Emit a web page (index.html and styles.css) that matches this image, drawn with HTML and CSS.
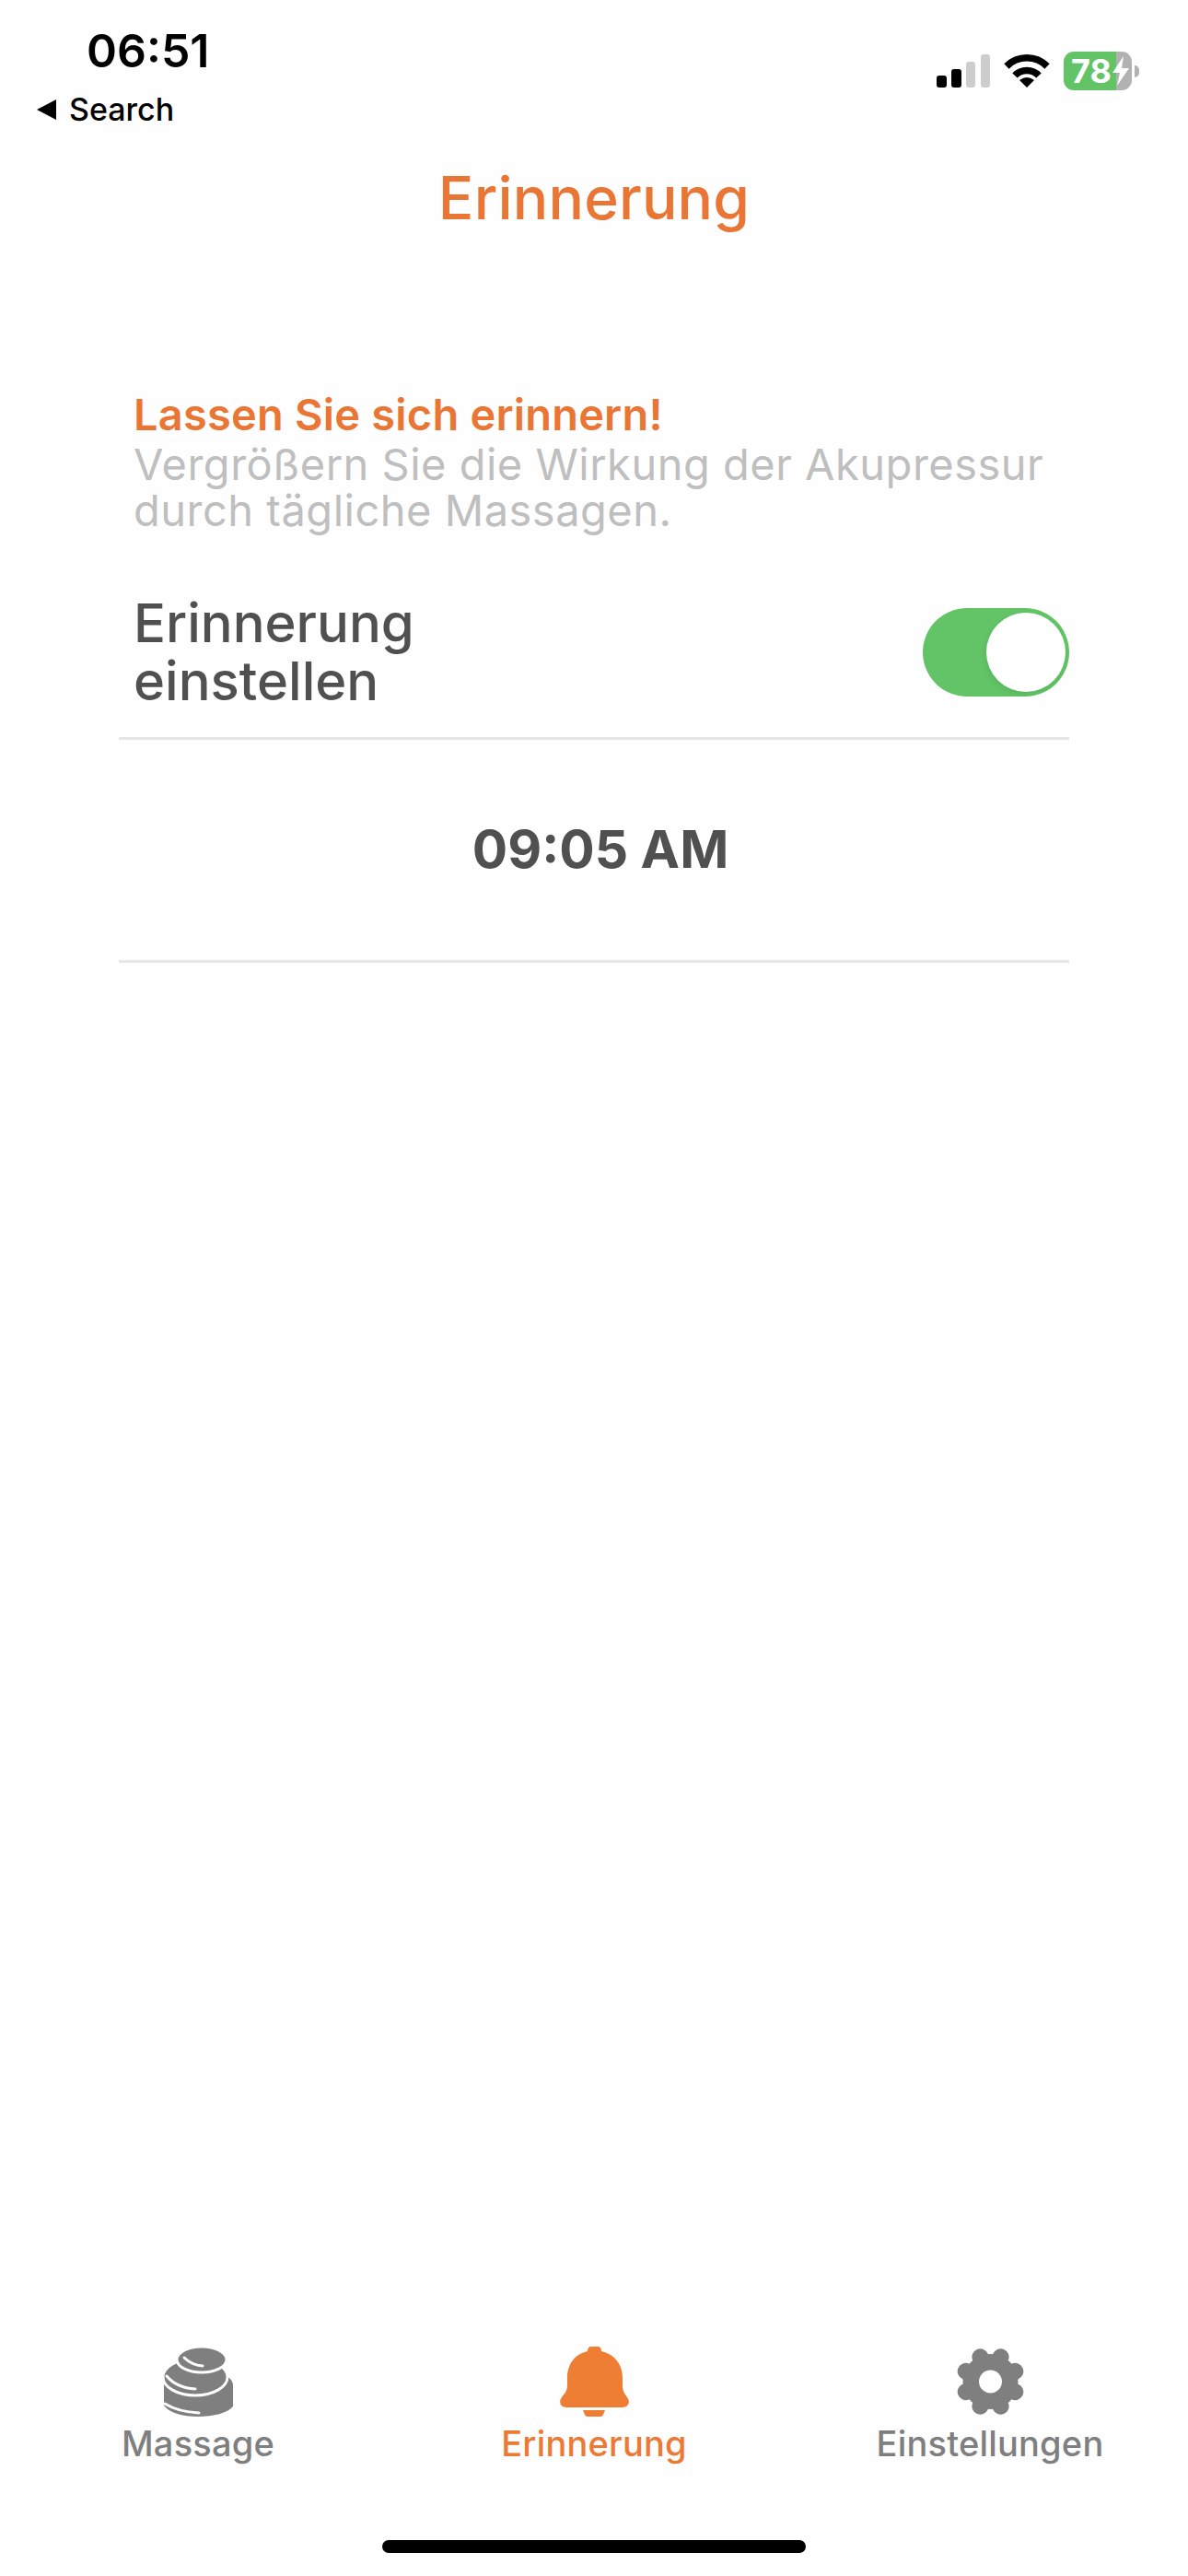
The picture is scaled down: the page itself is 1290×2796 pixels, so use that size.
FILE: index.html
```html
<!DOCTYPE html>
<html>
<head>
	<meta charset="utf-8">
	<link rel="stylesheet" href="styles.css">
	<title>Erinnerung</title>
</head>
<body>
	<div class="statusBar">
		<div class="statusLeft">
			<div class="clock">06:51</div>
			<div class="backLink">
				<svg class="backArrow" width="22" height="22" viewBox="0 0 22 22"><path d="M21 0V22L0 11Z"/></svg>
				<span>Search</span>
			</div>
		</div>
		<div class="statusRight">
			<svg class="signal" width="58" height="36" viewBox="0 0 58 36">
				<rect x="0" y="23" width="11" height="13" rx="3"/>
				<rect x="16" y="16" width="11" height="20" rx="3"/>
				<rect class="signalOff" x="32" y="8" width="10" height="28" rx="3"/>
				<rect class="signalOff" x="48" y="0" width="10" height="36" rx="3"/>
			</svg>
			<svg class="wifi" width="50" height="37" viewBox="0 0 50 37">
				<path class="wifiArc" d="M3 14A31 31 0 0 1 47 14"/>
				<path class="wifiArc" d="M12 24A18 18 0 0 1 38 24"/>
				<path d="M17 29Q25 23 33 29L25 37Z"/>
			</svg>
			<div class="battery">
				<span class="batteryLevel">78</span>
				<svg class="batteryBolt" width="20" height="32" viewBox="0 0 20 32"><path d="M13 0 1 18H9L6 32 19 13H11Z"/></svg>
			</div>
			<div class="batteryNub"></div>
		</div>
	</div>

	<div class="pageTitle">Erinnerung</div>

	<div class="content">
		<div class="intro">
			<div class="introHead">Lassen Sie sich erinnern!</div>
			<div class="introText">Vergrößern Sie die Wirkung der Akupressur<br>durch tägliche Massagen.</div>
		</div>
		<div class="reminderRow">
			<div class="reminderLabel">Erinnerung<br>einstellen</div>
			<div class="toggle"><div class="toggleKnob"></div></div>
		</div>
		<div class="timeRow">09:05 AM</div>
	</div>

	<div class="tabBar">
		<div class="tab">
			<svg class="tabIcon" width="75" height="76" viewBox="0 0 75 76">
				<path class="iconGrey" d="M0 38V64C6 72 20 76 37 76C54 76 69 72 75 65V42C75 20 0 20 0 38Z"/>
				<ellipse class="iconGrey stoneEdge" cx="34" cy="33" rx="35" ry="20"/>
				<ellipse class="iconGrey stoneEdge" cx="41" cy="14" rx="27" ry="14"/>
				<path class="stoneShine" d="M22 12Q30 20 42 21"/>
				<path class="stoneShine" d="M3 32Q14 45 34 46"/>
				<path class="stoneShine" d="M1 62Q16 71 38 72"/>
			</svg>
			<span>Massage</span>
		</div>
		<div class="tab tabActive">
			<svg class="tabIcon" width="75" height="76" viewBox="0 0 75 76">
				<path d="M30 5Q30 0 34 0H41Q45 0 45 5C58 8 68 18 68 34V42C68 49 71 52 73 55C77 60 74 66 68 66H7C1 66 -2 60 2 55C4 52 8 49 8 42V34C8 18 17 8 30 5Z"/>
				<path d="M25 69H49L47 74Q46 76 44 76H30Q28 76 27 74Z"/>
			</svg>
			<span>Erinnerung</span>
		</div>
		<div class="tab">
			<svg class="tabIcon" width="75" height="76" viewBox="-37.5 -38 75 76">
				<circle class="iconGrey" r="30"/>
				<g class="gearTeeth">
					<path d="M0 -29V29" transform="rotate(22.5)"/>
					<path d="M0 -29V29" transform="rotate(67.5)"/>
					<path d="M0 -29V29" transform="rotate(112.5)"/>
					<path d="M0 -29V29" transform="rotate(157.5)"/>
				</g>
				<circle class="gearHole" r="12.5"/>
			</svg>
			<span>Einstellungen</span>
		</div>
	</div>
	<div class="homeBar"></div>
</body>
</html>
```
FILE: styles.css
```css
html, body{
	margin: 0;
	padding: 0;
}
body{
	width: 1290px;
	height: 2796px;
	overflow: hidden;
	display: flex;
	flex-direction: column;
	background-color: #fefefe;
	font-family: 'Inter', sans-serif;
}
.statusBar{
	height: 175px;
	display: flex;
	justify-content: space-between;
	padding: 0 53px 0 40px;
}
.statusLeft{
	padding-top: 25px;
	color: black;
}
.clock{
	margin-left: 54px;
	font-size: 50px;
	line-height: 60px;
	font-weight: 600;
}
.backLink{
	display: flex;
	align-items: center;
	gap: 13px;
	margin-top: 15px;
	font-size: 34px;
	line-height: 38px;
	font-weight: 500;
}
.statusRight{
	display: flex;
	align-items: flex-start;
	padding-top: 56px;
}
.signal{
	margin-top: 3px;
}
.signalOff{
	fill: #cdcdcd;
}
.wifi{
	margin: 2px 0 0 15px;
}
.wifiArc{
	fill: none;
	stroke: black;
	stroke-width: 7.5;
}
.battery{
	width: 74px;
	height: 42px;
	margin-left: 15px;
	box-sizing: border-box;
	padding-left: 8px;
	display: flex;
	align-items: center;
	border-radius: 11px;
	background: linear-gradient(to right, #62c466 77%, #b2b2b2 77%);
	font-size: 36px;
	font-weight: 700;
	color: white;
}
.batteryBolt{
	fill: white;
}
.batteryNub{
	width: 5px;
	height: 13px;
	margin: 15px 0 0 3px;
	border-radius: 0 5px 5px 0;
	background-color: #b2b2b2;
}
.pageTitle{
	text-align: center;
	font-size: 64px;
	line-height: 80px;
	font-weight: 500;
	letter-spacing: 0.2px;
	color: #e97634;
}
.content{
	padding: 0 129px;
	flex-grow: 1;
}
.intro{
	margin-top: 169px;
	padding-left: 16px;
}
.introHead{
	margin-bottom: 3px;
	font-size: 47px;
	line-height: 52px;
	font-weight: 600;
	letter-spacing: 0.2px;
	color: #e97634;
}
.introText{
	font-size: 47px;
	line-height: 50px;
	letter-spacing: 0.5px;
	color: #bfbfbf;
}
.reminderRow{
	display: flex;
	justify-content: space-between;
	align-items: center;
	height: 184px;
	padding: 37px 0 0 16px;
	border-bottom: solid 3px #e6e6e6;
	font-size: 58px;
	line-height: 63px;
	font-weight: 500;
	color: #505050;
}
.toggle{
	width: 159px;
	height: 96px;
	box-sizing: border-box;
	padding: 5px 4px;
	display: flex;
	justify-content: flex-end;
	border-radius: 48px;
	background-color: #62c466;
}
.toggleKnob{
	width: 86px;
	height: 86px;
	border-radius: 50%;
	background-color: white;
	box-shadow: -1px 3px 6px rgba(0,0,0,.08);
}
.timeRow{
	height: 236px;
	padding: 0 0 3px 14px;
	display: flex;
	align-items: center;
	justify-content: center;
	border-bottom: solid 3px #e6e6e6;
	font-size: 57px;
	font-weight: 700;
	color: #505050;
}
.tabBar{
	display: grid;
	grid-template-columns: 430px 430px 430px;
}
.tab{
	display: flex;
	flex-direction: column;
	align-items: center;
	gap: 6px;
	font-size: 38px;
	line-height: 46px;
	font-weight: 500;
	letter-spacing: 0.2px;
	color: #7f7f7f;
}
.tabActive{
	color: #ec7a35;
}
.tabActive .tabIcon{
	fill: #ef7e35;
}
.iconGrey{
	fill: #7f7f7f;
}
.stoneEdge{
	stroke: #fefefe;
	stroke-width: 3;
}
.stoneShine{
	fill: none;
	stroke: #fefefe;
	stroke-width: 3;
	stroke-linecap: round;
}
.gearTeeth{
	fill: none;
	stroke: #7f7f7f;
	stroke-width: 18;
	stroke-linecap: round;
}
.gearHole{
	fill: #fefefe;
}
.homeBar{
	width: 460px;
	height: 14px;
	margin: 82px auto 25px;
	border-radius: 7px;
	background-color: black;
}
```
